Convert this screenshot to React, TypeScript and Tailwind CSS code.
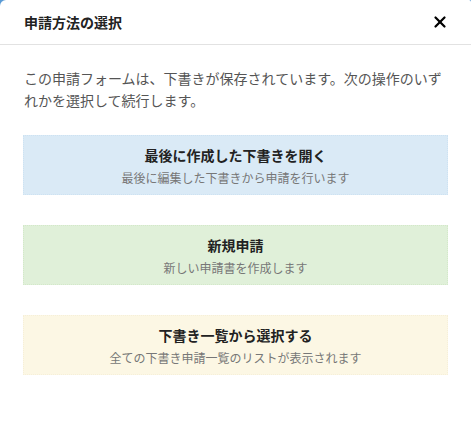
import { X } from 'lucide-react';

const font = { fontFamily: '"Noto Sans CJK JP", "Noto Sans", sans-serif' };

interface ChoiceProps {
    title: string;
    desc: string;
    className: string;
}

function Choice({ title, desc, className }: ChoiceProps) {
    return (
        <button
            type="button"
            className={`w-full border border-dotted pt-[9px] pb-[8px] text-center ${className}`}
        >
            <div className="text-[14px] font-bold leading-5 text-[#222]">{title}</div>
            <div className="mt-[5px] text-[12px] leading-[16px] text-[#777]">{desc}</div>
        </button>
    );
}

export default function App() {
    return (
        <div className="w-[471px] h-[425px] bg-[#5b9bd5]" style={font}>
            <div className="h-full bg-white rounded-tl-[6px] rounded-tr-[2px] overflow-hidden">
                {/* Header */}
                <div className="h-[45px] flex items-center justify-between pl-[24px] pr-[22px] border-b border-[#e2e2e2]">
                    <h2 className="text-[14px] font-bold text-[#222]">申請方法の選択</h2>
                    <X className="w-[18px] h-[18px] text-black" strokeWidth={3} />
                </div>

                {/* Body */}
                <div className="px-[24px] pt-[22px]">
                    <p className="text-[14px] leading-[22px] text-[#555]">
                        この申請フォームは、下書きが保存されています。次の操作のいずれかを選択して続行します。
                    </p>
                    <div className="mt-[24px] flex flex-col gap-[30px] -mx-px">
                        <Choice
                            title="最後に作成した下書きを開く"
                            desc="最後に編集した下書きから申請を行います"
                            className="bg-[#daeaf6] border-[#cde2f2]"
                        />
                        <Choice
                            title="新規申請"
                            desc="新しい申請書を作成します"
                            className="bg-[#e0f0d9] border-[#d3e8c9]"
                        />
                        <Choice
                            title="下書き一覧から選択する"
                            desc="全ての下書き申請一覧のリストが表示されます"
                            className="bg-[#fcf7e4] border-[#f6efd8]"
                        />
                    </div>
                </div>
            </div>
        </div>
    );
}
